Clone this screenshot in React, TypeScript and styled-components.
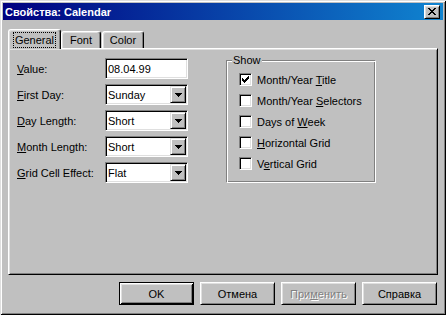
import React from "react";
import styled, { createGlobalStyle, css } from "styled-components";

const GlobalStyle = createGlobalStyle`
  html, body {
    margin: 0;
    padding: 0;
    background: #c0c0c0;
  }
  body {
    font-family: "Liberation Sans", Arial, sans-serif;
    font-size: 11px;
    color: #000;
  }
  * {
    box-sizing: border-box;
  }
`;

const raised = css`
  border: 1px solid;
  border-color: #fff #000 #000 #fff;
  box-shadow: inset 1px 1px #dfdfdf, inset -1px -1px #808080;
`;

const sunken = css`
  border: 1px solid;
  border-color: #808080 #fff #fff #808080;
  box-shadow: inset 1px 1px #000, inset -1px -1px #dfdfdf;
`;

const Window = styled.div`
  width: 446px;
  height: 315px;
  padding: 3px;
  background: #c0c0c0;
  box-shadow: inset 1px 1px #dfdfdf, inset -1px -1px #000, inset 2px 2px #fff,
    inset -2px -2px #808080;
  display: flex;
  flex-direction: column;
`;

const TitleBar = styled.div`
  height: 17px;
  flex: none;
  display: flex;
  align-items: center;
  justify-content: space-between;
  padding: 0 3px 0 2px;
  background: linear-gradient(90deg, #000080, #1084d0);
  color: #fff;
  font-weight: bold;
`;

const CloseButton = styled.div`
  width: 16px;
  height: 14px;
  background: #c0c0c0;
  display: flex;
  align-items: center;
  justify-content: center;
  ${raised}
`;

const TabRow = styled.div`
  height: 19px;
  flex: none;
  margin: 9px 5px 0;
  display: flex;
  align-items: flex-end;
`;

const Tab = styled.div<{ $active?: boolean; $w: number; $gap?: number }>`
  position: relative;
  z-index: ${(p) => (p.$active ? 2 : 1)};
  width: ${(p) => p.$w}px;
  height: ${(p) => (p.$active ? 20 : 17)}px;
  margin-bottom: ${(p) => (p.$active ? -1 : 0)}px;
  margin-left: ${(p) => p.$gap ?? 0}px;
  background: #c0c0c0;
  border-top: 1px solid #fff;
  border-left: 1px solid #fff;
  border-right: 1px solid #000;
  border-radius: 3px 3px 0 0;
  box-shadow: inset -1px 0 #808080, inset 1px 1px #dfdfdf;
  display: flex;
  justify-content: center;
  padding-top: ${(p) => (p.$active ? 3 : 2)}px;
`;

const Focus = styled.span`
  outline: 1px dotted #000;
  outline-offset: 0;
  padding: 0 1px;
  height: 14px;
  line-height: 14px;
`;

const Panel = styled.div`
  height: 227px;
  flex: none;
  margin: 0 5px;
  padding: 5px 8px;
  border: 1px solid;
  border-color: #fff #000 #000 #fff;
  box-shadow: inset 1px 1px #dfdfdf, inset -1px -1px #808080;
  display: flex;
  align-items: flex-start;
  gap: 38px;
`;

const Form = styled.div`
  padding-top: 4px;
  display: grid;
  grid-template-columns: 88px 83px;
  grid-auto-rows: 21px;
  row-gap: 5px;
  align-items: center;
`;

const Label = styled.span`
  white-space: nowrap;
`;

const TextBox = styled.div`
  height: 21px;
  background: #fff;
  padding-left: 2px;
  display: flex;
  align-items: center;
  ${sunken}
`;

const Combo = styled.div`
  height: 21px;
  background: #fff;
  padding: 1px 1px 1px 2px;
  display: flex;
  align-items: center;
  ${sunken}
`;

const ComboText = styled.span`
  flex: 1;
`;

const DropButton = styled.div`
  width: 16px;
  height: 17px;
  background: #c0c0c0;
  display: flex;
  align-items: center;
  justify-content: center;
  border: 1px solid;
  border-color: #dfdfdf #000 #000 #dfdfdf;
  box-shadow: inset 1px 1px #fff, inset -1px -1px #808080;
`;

const GroupBox = styled.fieldset`
  width: 150px;
  height: 129px;
  margin: 0;
  padding: 2px 12px 0;
  border: 1px solid;
  border-color: #808080 #fff #fff #808080;
  box-shadow: inset 1px 1px #fff, inset -1px -1px #808080;
`;

const Legend = styled.legend`
  margin-left: -7px;
  padding: 0 1px;
  line-height: 13px;
  background: #c0c0c0;
`;

const CheckRow = styled.div`
  height: 21px;
  display: flex;
  align-items: center;
  gap: 5px;
  white-space: nowrap;
`;

const CheckBox = styled.div`
  width: 13px;
  height: 13px;
  flex: none;
  background: #fff;
  display: flex;
  align-items: center;
  justify-content: center;
  ${sunken}
`;

const ButtonRow = styled.div`
  flex: none;
  margin: 7px 6px 0 0;
  display: flex;
  justify-content: flex-end;
  gap: 6px;
`;

const Button = styled.button<{ $default?: boolean; $disabled?: boolean }>`
  width: 75px;
  height: 23px;
  padding: 0;
  font: inherit;
  background: #c0c0c0;
  color: ${(p) => (p.$disabled ? "#808080" : "#000")};
  text-shadow: ${(p) => (p.$disabled ? "1px 1px #fff" : "none")};
  ${(p) =>
    p.$default
      ? css`
          border: 1px solid #000;
          box-shadow: inset 1px 1px #fff, inset -1px -1px #000,
            inset 2px 2px #dfdfdf, inset -2px -2px #808080;
        `
      : raised}
`;

const Arrow = () => (
  <svg width="7" height="4" viewBox="0 0 7 4">
    <path d="M0 0h7v1H0zM1 1h5v1H1zM2 2h3v1H2zM3 3h1v1H3z" fill="#000" />
  </svg>
);

const Check = () => (
  <svg width="7" height="7" viewBox="0 0 7 7">
    <path
      d="M6 0h1v3H6zM5 1h1v3H5zM4 2h1v3H4zM3 3h1v3H3zM2 4h1v3H2zM1 3h1v3H1zM0 2h1v3H0z"
      fill="#000"
    />
  </svg>
);

const fields = [
  { key: "V", rest: "alue:", value: "08.04.99", combo: false },
  { key: "F", rest: "irst Day:", value: "Sunday", combo: true },
  { key: "D", rest: "ay Length:", value: "Short", combo: true },
  { key: "M", rest: "onth Length:", value: "Short", combo: true },
  { key: "G", rest: "rid Cell Effect:", value: "Flat", combo: true },
];

const options = [
  { pre: "Month/Year ", key: "T", post: "itle", checked: true },
  { pre: "Month/Year ", key: "S", post: "electors", checked: false },
  { pre: "Days of ", key: "W", post: "eek", checked: false },
  { pre: "", key: "H", post: "orizontal Grid", checked: false },
  { pre: "V", key: "e", post: "rtical Grid", checked: false },
];

export default function App() {
  return (
    <>
      <GlobalStyle />
      <Window>
        <TitleBar>
          <span>Свойства: Calendar</span>
          <CloseButton>
            <svg width="8" height="7" viewBox="0 0 8 7">
              <path
                d="M0 0h2v1H0zM6 0h2v1H6zM1 1h2v1H1zM5 1h2v1H5zM2 2h4v1H2zM3 3h2v1H3zM2 4h4v1H2zM1 5h2v1H1zM5 5h2v1H5zM0 6h2v1H0zM6 6h2v1H6z"
                fill="#000"
              />
            </svg>
          </CloseButton>
        </TitleBar>

        <TabRow>
          <Tab $active $w={53}>
            <Focus>General</Focus>
          </Tab>
          <Tab $w={40}>Font</Tab>
          <Tab $w={42} $gap={1}>
            Color
          </Tab>
        </TabRow>

        <Panel>
          <Form>
            {fields.map((f) => (
              <React.Fragment key={f.rest}>
                <Label>
                  <u>{f.key}</u>
                  {f.rest}
                </Label>
                {f.combo ? (
                  <Combo>
                    <ComboText>{f.value}</ComboText>
                    <DropButton>
                      <Arrow />
                    </DropButton>
                  </Combo>
                ) : (
                  <TextBox>{f.value}</TextBox>
                )}
              </React.Fragment>
            ))}
          </Form>

          <GroupBox>
            <Legend>Show</Legend>
            {options.map((o) => (
              <CheckRow key={o.post}>
                <CheckBox>{o.checked && <Check />}</CheckBox>
                <span>
                  {o.pre}
                  <u>{o.key}</u>
                  {o.post}
                </span>
              </CheckRow>
            ))}
          </GroupBox>
        </Panel>

        <ButtonRow>
          <Button $default>OK</Button>
          <Button>Отмена</Button>
          <Button $disabled>
            При<u>м</u>енить
          </Button>
          <Button>Справка</Button>
        </ButtonRow>
      </Window>
    </>
  );
}
